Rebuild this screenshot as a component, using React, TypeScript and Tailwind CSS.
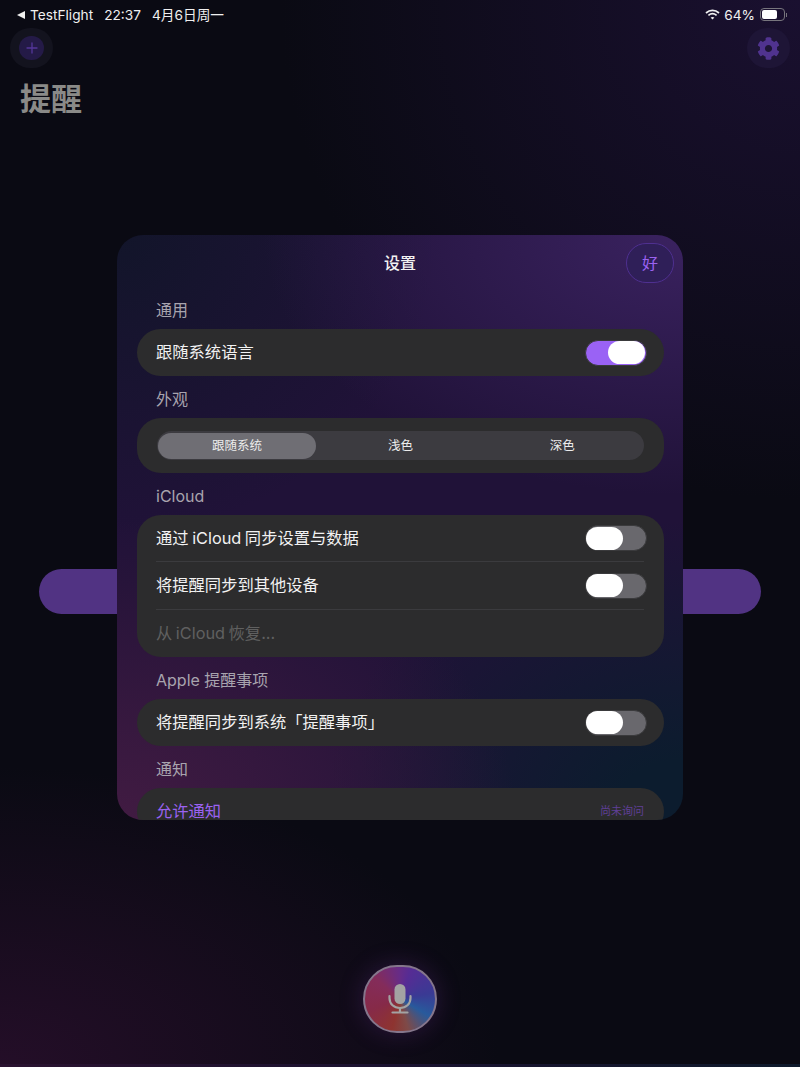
import React from 'react';
import { FaCog } from 'react-icons/fa';

const Toggle = ({ on = false }: { on?: boolean }) => (
  <div
    className={`flex h-[26px] w-[62px] items-center rounded-full border border-[#3a3a3c] ${
      on ? 'justify-end bg-[#9a62f5] pr-[1px]' : 'justify-start bg-[#69686d]'
    }`}
  >
    <div className="h-[23px] w-[37px] rounded-full bg-white" />
  </div>
);

const Label = ({ children }: { children: React.ReactNode }) => (
  <div className="flex h-[42px] items-center pl-[19px] pt-[4px] text-[16px] text-[#a8a4ae]">{children}</div>
);

const ToggleRow = ({ text, on = false, short = false }: { text: string; on?: boolean; short?: boolean }) => (
  <div
    className={`flex items-center justify-between pl-[19px] pr-[17px] text-[16.3px] text-[#f2f2f2] [word-spacing:-1px] ${
      short ? 'h-[46px]' : 'h-[47px]'
    }`}
  >
    <span>{text}</span>
    <Toggle on={on} />
  </div>
);

const Card = ({ children }: { children: React.ReactNode }) => (
  <div className="rounded-[24px] bg-[#2c2c2d]">{children}</div>
);

const Divider = () => <div className="ml-[19px] mr-[20px] h-[1px] bg-[#3b3b3e]" />;

export default function App() {
  return (
    <div className="relative flex h-[1067px] w-[800px] flex-col overflow-hidden bg-[#0a0a13] bg-[radial-gradient(ellipse_520px_500px_at_100%_0%,#1a1030_0%,transparent_100%),radial-gradient(ellipse_500px_300px_at_0%_100%,#240e28_0%,transparent_100%)] font-['Inter','Noto_Sans_CJK_SC',sans-serif]">
      {/* status bar */}
      <div className="flex h-[28px] items-center justify-between pl-[16px] pr-[13px] pt-[2px] text-[13.7px] text-[#f0f0f0]">
        <div className="flex items-center">
          <svg width="10" height="10" viewBox="0 0 10 10" className="mr-[4px]">
            <polygon points="9,1 9,9 1,5" fill="#f0f0f0" />
          </svg>
          <span>TestFlight</span>
          <span className="ml-[11px]">22:37</span>
          <span className="ml-[11px]">4月6日周一</span>
        </div>
        <div className="flex items-center">
          <svg width="15" height="11" viewBox="0 0 15 11" fill="none" stroke="#f0f0f0" strokeWidth="1.7" className="mr-[4px]">
            <path d="M1 4 C4.8 .6 10.2 .6 14 4" />
            <path d="M3.4 6.4 C5.8 4.4 9.2 4.4 11.6 6.4" />
            <path d="M7.5 10.4 L5.6 8.5 C6.7 7.7 8.3 7.7 9.4 8.5 Z" fill="#f0f0f0" stroke="none" />
          </svg>
          <span>64%</span>
          <div className="ml-[5px] flex h-[13px] w-[25px] items-center rounded-[4px] border border-[#77757d] p-[1px]">
            <div className="h-full w-[15px] rounded-[2px] bg-white" />
          </div>
          <div className="ml-[1px] h-[4px] w-[1px] bg-[#77757d]" />
        </div>
      </div>

      {/* top actions */}
      <div className="flex items-center justify-between px-[10px]">
        <div className="flex h-[40px] w-[43px] items-center justify-center rounded-full bg-[#13131e]">
          <div className="flex h-[24px] w-[25px] items-center justify-center rounded-full bg-[#241a47]">
            <svg width="12" height="12" viewBox="0 0 12 12" stroke="#54369a" strokeWidth="1.3" strokeLinecap="round">
              <path d="M6 1 V11 M1 6 H11" />
            </svg>
          </div>
        </div>
        <div className="flex h-[40px] w-[43px] items-center justify-center rounded-full bg-[#1e1536]">
          <FaCog className="h-[23px] w-[23px] text-[#50338f]" />
        </div>
      </div>

      <h1 className="mt-[9px] pl-[20px] text-[31px] font-bold leading-[44px] text-[#8a8a88]">提醒</h1>

      {/* list item behind the sheet */}
      <div className="mx-[39px] mt-[448px] h-[45px] rounded-[23px] bg-[#513383]" />

      {/* mic */}
      <div className="mb-[34px] mt-auto flex justify-center">
        <div className="flex h-[68px] w-[74px] items-center justify-center rounded-full border-2 border-[#85768c] bg-[conic-gradient(from_20deg,#562c94_0deg,#3a3a94_60deg,#285a9c_100deg,#7e4a48_145deg,#8e3430_175deg,#862a48_230deg,#842c5a_290deg,#662c88_340deg,#562c94_360deg)] shadow-[0_0_24px_rgba(110,50,150,0.3)]">
          <svg width="28" height="30" viewBox="0 0 28 30" fill="none" stroke="#a3a3a3" strokeWidth="2.2" strokeLinecap="round">
            <rect x="8.5" y="0" width="11" height="20" rx="5.5" fill="#a3a3a3" stroke="none" />
            <path d="M3.5 12 V14 C3.5 20 8 24 14 24 C20 24 24.5 20 24.5 14 V12" />
            <path d="M14 24 V28.5 M6.5 28.5 H21.5" />
          </svg>
        </div>
      </div>

      {/* next row peeking at the bottom edge */}
      <div className="absolute bottom-0 left-0 h-[3px] w-full bg-gradient-to-r from-[#2a1230] via-[#1a1230] to-[#0e1a2c]" />

      {/* settings sheet */}
      <div className="absolute left-[117px] top-[235px] h-[585px] w-[566px] overflow-hidden rounded-[26px] bg-[#201238] bg-[radial-gradient(ellipse_420px_260px_at_100%_0%,#3a2260_0%,transparent_100%),radial-gradient(ellipse_400px_300px_at_0%_100%,#411b42_0%,transparent_100%),radial-gradient(ellipse_360px_300px_at_100%_100%,#0c1c2e_0%,#0c1c2e_20%,transparent_100%),radial-gradient(ellipse_320px_300px_at_0%_0%,#12152a_0%,transparent_100%)] pl-[20px] pr-[19px]">
        <div className="-ml-[20px] -mr-[19px] grid h-[52px] grid-cols-[1fr_auto_1fr] items-center pt-[4px]">
          <div />
          <span className="text-[16px] font-medium text-[#f2f2f2]">设置</span>
          <div className="mr-[9px] flex h-[40px] w-[48px] items-center justify-center justify-self-end rounded-full border border-[#4f3090] bg-[#2f1f58] text-[16px] text-[#9a62f0]">
            好
          </div>
        </div>

        <Label>通用</Label>
        <Card>
          <ToggleRow text="跟随系统语言" on />
        </Card>

        <Label>外观</Label>
        <Card>
          <div className="px-[20px] py-[13px]">
            <div className="grid h-[29px] grid-cols-3 items-center rounded-full bg-[#3c3b40] p-[1px] text-[12.5px] text-[#ececec]">
              <div className="flex h-[26px] w-[158px] items-center justify-center rounded-full bg-[#6f6e74] pt-[1px]">跟随系统</div>
              <div className="pt-[1px] text-center">浅色</div>
              <div className="pt-[1px] text-center">深色</div>
            </div>
          </div>
        </Card>

        <Label>iCloud</Label>
        <Card>
          <ToggleRow text="通过 iCloud 同步设置与数据" short />
          <Divider />
          <ToggleRow text="将提醒同步到其他设备" />
          <Divider />
          <div className="flex h-[47px] items-center pl-[19px] text-[16.3px] text-[#606060] [word-spacing:-1px]">从 iCloud 恢复...</div>
        </Card>

        <Label>Apple 提醒事项</Label>
        <Card>
          <ToggleRow text="将提醒同步到系统「提醒事项」" />
        </Card>

        <Label>通知</Label>
        <Card>
          <div className="flex h-[47px] items-center justify-between pl-[19px] pr-[20px]">
            <span className="text-[16.3px] text-[#9a62f0]">允许通知</span>
            <span className="text-[11px] text-[#5f3f95]">尚未询问</span>
          </div>
        </Card>
      </div>
    </div>
  );
}
